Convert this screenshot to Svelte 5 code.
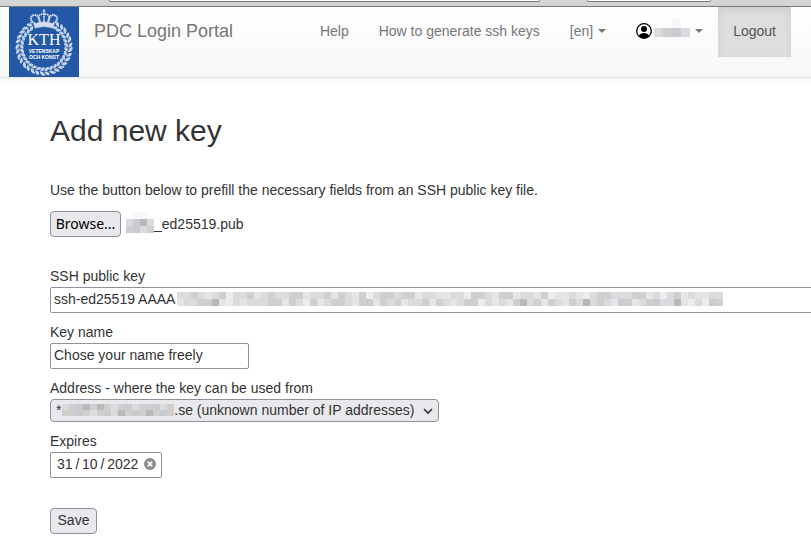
<script lang="ts">
	let publicKey: string = 'ssh-ed25519 AAAA';
	let keyName: string = 'Chose your name freely';
	let expires: string = '31\u2009/\u200910\u2009/\u20092022';
	let fileInput: HTMLInputElement;

	const gap = '\u00a0'.repeat(29);
	const address = '*' + gap + '.se (unknown number of IP addresses)';

	// masked values, one string of grey levels per row of tiles
	const userTiles = ['..0.', 'dcbd'];
	const fileTiles = ['.00.', 'dbad', 'cbdc'];
	const keyTiles = [
		'ddcdedcfddcedcddcceddcecdecfdccdcceddeeddfccdecceddecfeedefdccdddccedfdcedeedd',
		'eddcc8efdedddccecdfcedccdecbecdceddcecdedccfdedecadcecdecd9dcdebcedcbddaefdfbc'
	];
	const addressTiles = ['dcbacacdcbdccbdc', 'ccbcdcbdacbcacbc'];

	const shades: Record<string, string> = {
		'.': 'transparent',
		'0': '#f7f7f7',
		'8': '#b8b8ba',
		'9': '#bcb5b5',
		a: '#bab8bc',
		b: '#c8cbd2',
		c: '#d1cfce',
		d: '#dadbdc',
		e: '#e4e5e4',
		f: '#ededed'
	};

	// sprigs of the wreath, left open at the top for the crown
	const sprigs = Array.from({ length: 28 }, (_, i) => 32 + (i * 296) / 27 - 90);

	function clearDate() {
		expires = '';
	}
</script>

<div class="browser-edge"><span class="tab"></span><span class="tab"></span></div>

<header class="navbar">
	<a class="logo" href="/" aria-label="KTH">
		<svg viewBox="0 0 70 70" width="70" height="70">
			<rect width="70" height="70" fill="#2258a5" />
			<g fill="#c3d2e9">
				{#each sprigs as angle, i}
					<g transform="translate(35 40) rotate({angle})">
						<path d="M24.5 2 Q24-3 28.5-3 Q29 1 24.5 2Z" />
						<path d="M24 1.5 Q19.5 1 20.5-3 Q24.5-3 24 1.5Z" />
						<circle cx={i % 2 ? 27.5 : 21.5} cy="2" r=".9" />
					</g>
				{/each}
			</g>
			<g fill="none" stroke="#d3dff0">
				<path d="M25 17 Q35 13 45 17 L44 21 Q35 18 26 21Z" fill="#d3dff0" stroke-width=".6" />
				<path d="M26 17 Q18 11 25 8 Q29 7 31 15 M44 17 Q52 11 45 8 Q41 7 39 15" stroke-width="2" stroke-dasharray="1.6 .5" />
				<path d="M31 15 Q27 7 35 7 Q43 7 39 15 M35 7v8" stroke-width="1.7" stroke-dasharray="1.6 .5" />
				<path d="M35 2v5M33.5 4h3" stroke-width="1.2" />
			</g>
			<g fill="#fff" text-anchor="middle">
				<text class="kth" x="35" y="38">KTH</text>
				<text class="motto" x="35" y="46">VETENSKAP</text>
				<text class="motto" x="35" y="52">OCH KONST</text>
			</g>
		</svg>
	</a>
	<a class="brand" href="/">PDC Login Portal</a>
	<nav>
		<a href="/help">Help</a>
		<a href="/ssh">How to generate ssh keys</a>
		<a href="/language">[en] <span class="caret"></span></a>
		<a href="/user" aria-label="User">
			<svg viewBox="0 0 16 16" width="16" height="16">
				<circle cx="8" cy="8" r="7.3" fill="#fff" stroke="#000" stroke-width="1.3" />
				<circle cx="8" cy="6" r="3" />
				<path d="M2.7 12.7 Q4.5 9.8 8 10 Q11.5 9.8 13.3 12.7 Q8 18 2.7 12.7Z" />
			</svg>
			<span class="tiles user-tiles">
				{#each userTiles as row}
					<span>{#each row as tile}<i style="background: {shades[tile]}"></i>{/each}</span>
				{/each}
			</span>
			<span class="caret"></span>
		</a>
		<a class="active" href="/logout">Logout</a>
	</nav>
</header>

<main>
	<h1>Add new key</h1>
	<p>Use the button below to prefill the necessary fields from an SSH public key file.</p>
	<div class="file-row">
		<input type="file" hidden bind:this={fileInput} aria-label="SSH public key file" />
		<button class="browse" type="button" on:click={() => fileInput.click()}>Browse...</button>
		<span class="tiles file-tiles">
			{#each fileTiles as row}
				<span>{#each row as tile}<i style="background: {shades[tile]}"></i>{/each}</span>
			{/each}
		</span>
		<span>_ed25519.pub</span>
	</div>

	<form on:submit|preventDefault>
		<label for="public-key">SSH public key</label>
		<div class="field key-field">
			<input id="public-key" type="text" bind:value={publicKey} />
			<span class="tiles key-tiles">
				{#each keyTiles as row}
					<span>{#each row as tile}<i style="background: {shades[tile]}"></i>{/each}</span>
				{/each}
			</span>
		</div>

		<label for="key-name">Key name</label>
		<div class="field">
			<input id="key-name" class="name" type="text" bind:value={keyName} />
		</div>

		<label for="address">Address - where the key can be used from</label>
		<div class="field">
			<select id="address">
				<option>{address}</option>
			</select>
			<span class="tiles address-tiles">
				{#each addressTiles as row}
					<span>{#each row as tile}<i style="background: {shades[tile]}"></i>{/each}</span>
				{/each}
			</span>
			<svg class="arrow" viewBox="0 0 10 10" width="10" height="10">
				<path d="M1 3l4 4 4-4" fill="none" stroke="#333" stroke-width="1.6" />
			</svg>
		</div>

		<label for="expires">Expires</label>
		<div class="field date-field">
			<input id="expires" type="text" bind:value={expires} />
			<button class="clear" type="button" aria-label="Clear" on:click={clearDate}>
				<svg viewBox="0 0 12 12" width="12" height="12">
					<circle cx="6" cy="6" r="6" fill="#8c8c8c" />
					<path d="M3.7 3.7l4.6 4.6M8.3 3.7 3.7 8.3" stroke="#fff" stroke-width="1.7" />
				</svg>
			</button>
		</div>

		<button class="save" type="submit">Save</button>
	</form>
</main>

<style>
	:global(body) {
		overflow: hidden;
		background: #fff;
		color: #333;
		font: 14px/20px 'Liberation Sans', Arial, sans-serif;
	}
	.browser-edge {
		box-sizing: border-box;
		display: flex;
		gap: 47px;
		height: 7px;
		padding-left: 109px;
		border-bottom: 1px solid #7c7c7a;
		background: #d4d4d4;
	}
	.tab {
		box-sizing: border-box;
		width: 431px;
		height: 2px;
		border: 1px solid #777;
		border-top: 0;
		border-radius: 0 0 3px 3px;
		background: #fff;
	}
	.tab + .tab {
		width: 124px;
	}
	.navbar {
		display: flex;
		align-items: flex-start;
		height: 70px;
		padding: 0 20px 0 9px;
		border-bottom: 1px solid #e5e5e5;
		background: linear-gradient(#fff, #f7f7f7);
		box-shadow: 0 1px 5px rgba(0, 0, 0, 0.08);
	}
	.navbar a {
		color: #777;
		text-decoration: none;
	}
	.logo svg {
		display: block;
	}
	.kth {
		font: 16px 'Liberation Serif', serif;
	}
	.motto {
		font: bold 5px 'Liberation Sans', sans-serif;
	}
	.brand {
		padding: 14px 15px;
		font-size: 18px;
		white-space: nowrap;
	}
	nav {
		display: flex;
		margin-left: auto;
		white-space: nowrap;
	}
	nav a {
		box-sizing: border-box;
		display: flex;
		align-items: center;
		height: 50px;
		padding: 0 15px 2px;
	}
	nav a.active {
		color: #555;
		background: #dedede;
		box-shadow: inset 0 3px 9px rgba(0, 0, 0, 0.075);
	}
	.caret {
		margin-left: 5px;
		border-top: 4px solid #777;
		border-right: 4px solid transparent;
		border-left: 4px solid transparent;
	}
	.tiles {
		display: flex;
		flex-direction: column;
	}
	.tiles span {
		display: flex;
	}
	.tiles i {
		width: 7px;
		height: 7px;
	}
	.user-tiles {
		margin: 0 0 6px 2px;
	}
	.user-tiles i {
		width: 9px;
		height: 9px;
	}
	.file-tiles {
		margin: 0 0 4px 5px;
	}
	main {
		padding: 36px 0 0 50px;
	}
	h1 {
		margin: 0 0 33px;
		font-size: 30px;
		font-weight: 400;
		line-height: 33px;
	}
	p {
		margin: 0 0 10px;
	}
	.file-row {
		display: flex;
		align-items: center;
		height: 28px;
		margin-bottom: 28px;
	}
	label {
		display: block;
		margin-bottom: 1px;
	}
	.field {
		position: relative;
		width: fit-content;
		margin-bottom: 9px;
	}
	input,
	select,
	button {
		box-sizing: border-box;
		height: 26px;
		margin: 0;
		padding: 0 3px 2px;
		border: 1px solid #8f8f9d;
		border-radius: 2px;
		background: #fff;
		color: #333;
		font: inherit;
	}
	.field input,
	select {
		display: block;
	}
	.browse,
	.save,
	select {
		padding: 0 5px 2px;
		border-radius: 4px;
		background: #e9e9ed;
	}
	.browse {
		width: 71px;
		padding: 0;
		color: #000;
		font-family: 'Noto Sans', sans-serif;
	}
	.key-field {
		width: auto;
		margin-right: -20px;
	}
	.key-field input {
		width: 100%;
	}
	.key-tiles {
		position: absolute;
		top: 5px;
		left: 127px;
	}
	.name {
		width: 199px;
	}
	select {
		width: 389px;
		height: 23px;
		padding-bottom: 3px;
		appearance: none;
	}
	.address-tiles {
		position: absolute;
		top: 5px;
		left: 12px;
	}
	.address-tiles i {
		height: 6px;
	}
	.arrow {
		position: absolute;
		top: 7px;
		right: 6px;
	}
	.date-field input {
		width: 112px;
		padding-left: 6px;
	}
	.clear {
		position: absolute;
		top: 6px;
		right: 6px;
		width: 12px;
		height: 12px;
		padding: 0;
		border: 0;
		background: none;
	}
	.clear svg {
		display: block;
	}
	.save {
		width: 47px;
		margin-top: 21px;
	}
</style>
